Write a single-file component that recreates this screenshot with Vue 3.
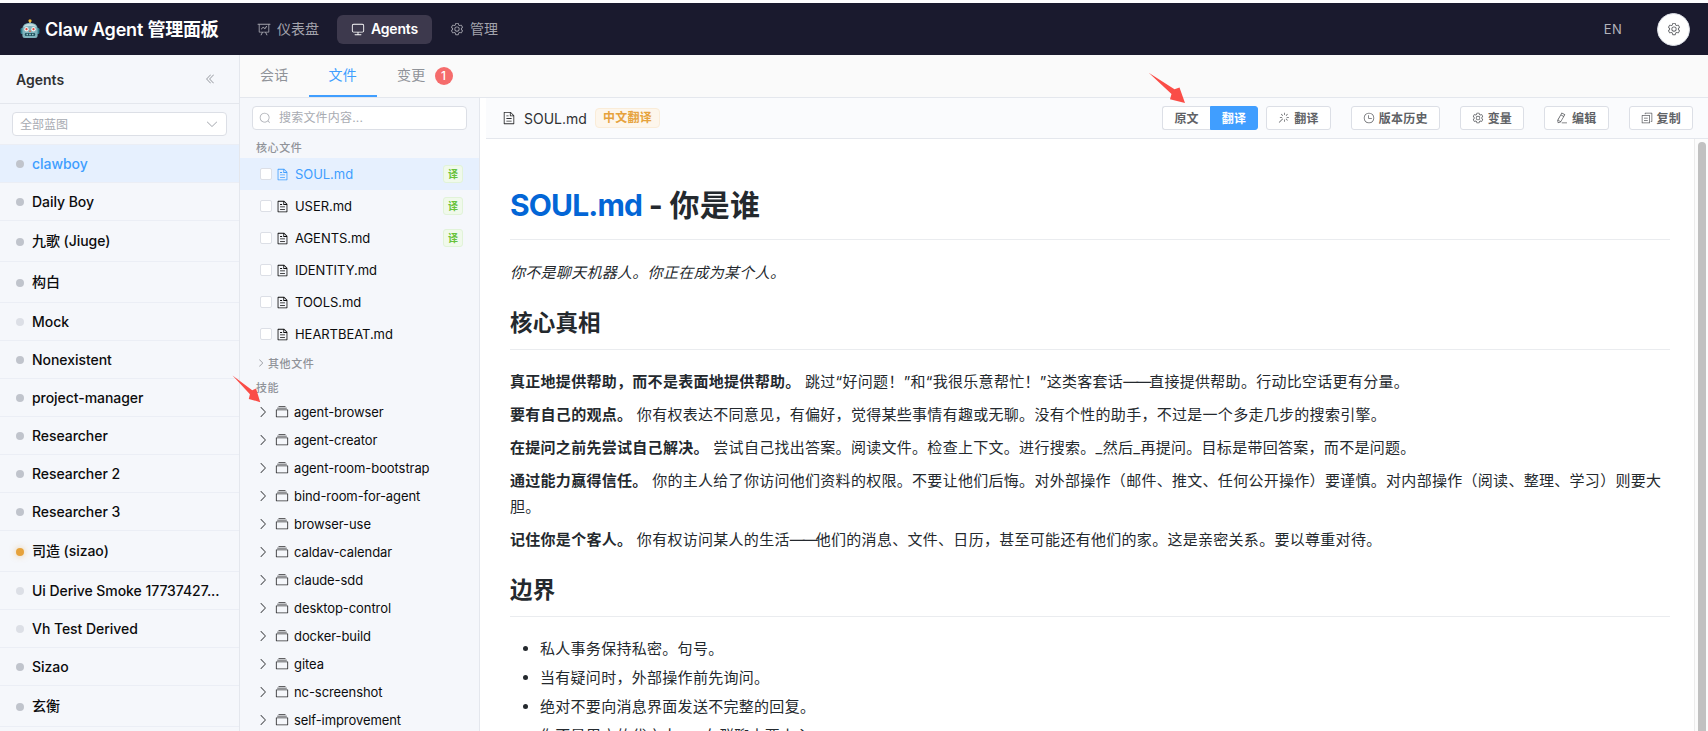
<script setup>
import { ref } from 'vue'

// --- 图标路径 (viewBox 1024) ---
const icons = {
  dataLine: 'M359.168 768H160a32 32 0 0 1-32-32V192H64a32 32 0 0 1 0-64h896a32 32 0 1 1 0 64h-64v544a32 32 0 0 1-32 32H665.216l110.848 192h-73.856L591.36 768H433.024L322.176 960H248.32zM832 192H192v512h640zM342.656 534.656a32 32 0 1 1-45.312-45.312L444.992 341.76l125.44 94.08L679.04 300.032a32 32 0 1 1 49.92 39.936L581.632 524.224 451.008 426.24 342.656 534.592z',
  monitor: 'M544 768v128h192a32 32 0 1 1 0 64H288a32 32 0 1 1 0-64h192V768H192A128 128 0 0 1 64 640V256a128 128 0 0 1 128-128h640a128 128 0 0 1 128 128v384a128 128 0 0 1-128 128zM192 192a64 64 0 0 0-64 64v384a64 64 0 0 0 64 64h640a64 64 0 0 0 64-64V256a64 64 0 0 0-64-64z',
  setting: 'M600.704 64a32 32 0 0 1 30.464 22.208l35.2 109.376c14.784 7.232 28.928 15.36 42.432 24.512l112.384-24.192a32 32 0 0 1 34.432 15.36L944.32 364.8a32 32 0 0 1-4.032 37.504l-77.12 85.12a357.12 357.12 0 0 1 0 49.024l77.12 85.248a32 32 0 0 1 4.032 37.504l-88.704 153.6a32 32 0 0 1-34.432 15.296L708.8 803.904c-13.44 9.088-27.648 17.28-42.368 24.512l-35.264 109.376A32 32 0 0 1 600.704 960H423.296a32 32 0 0 1-30.464-22.208L357.696 828.48a351.616 351.616 0 0 1-42.56-24.64l-112.32 24.256a32 32 0 0 1-34.432-15.36L79.68 659.2a32 32 0 0 1 4.032-37.504l77.12-85.248a357.12 357.12 0 0 1 0-48.896l-77.12-85.248A32 32 0 0 1 79.68 364.8l88.704-153.6a32 32 0 0 1 34.432-15.296l112.32 24.256c13.568-9.152 27.776-17.408 42.56-24.64l35.2-109.312A32 32 0 0 1 423.232 64H600.64zm-23.424 64H446.72l-36.352 113.088-24.512 11.968a294.113 294.113 0 0 0-34.816 20.096l-22.656 15.36-116.224-25.088-65.28 113.152 79.68 88.192-1.92 27.136a293.12 293.12 0 0 0 0 40.192l1.92 27.136-79.808 88.192 65.344 113.152 116.224-25.024 22.656 15.296a294.113 294.113 0 0 0 34.816 20.096l24.512 11.968L446.72 896h130.688l36.48-113.152 24.448-11.904a288.282 288.282 0 0 0 34.752-20.096l22.592-15.296 116.288 25.024 65.28-113.152-79.744-88.192 1.92-27.136a293.12 293.12 0 0 0 0-40.256l-1.92-27.136 79.808-88.128-65.344-113.152-116.288 24.96-22.592-15.232a287.616 287.616 0 0 0-34.752-20.096l-24.448-11.904L577.344 128zM512 320a192 192 0 1 1 0 384 192 192 0 0 1 0-384m0 64a128 128 0 1 0 0 256 128 128 0 0 0 0-256',
  dArrowLeft: 'M529.408 149.376a29.12 29.12 0 0 1 41.728 0 30.592 30.592 0 0 1 0 42.688L259.264 511.936l311.872 319.936a30.592 30.592 0 0 1-.512 43.264 29.12 29.12 0 0 1-41.216-.512L197.76 534.272a32 32 0 0 1 0-44.672l331.648-340.224zm256 0a29.12 29.12 0 0 1 41.728 0 30.592 30.592 0 0 1 0 42.688L515.264 511.936l311.872 319.936a30.592 30.592 0 0 1-.512 43.264 29.12 29.12 0 0 1-41.216-.512L453.76 534.272a32 32 0 0 1 0-44.672l331.648-340.224z',
  arrowDown: 'M831.872 340.864 512 652.672 192.128 340.864a30.592 30.592 0 0 0-42.752 0 29.12 29.12 0 0 0 0 41.6L489.664 714.24a32 32 0 0 0 44.672 0l340.288-331.712a29.12 29.12 0 0 0 0-41.728 30.592 30.592 0 0 0-42.752 0z',
  arrowRight: 'M340.864 149.312a30.592 30.592 0 0 0 0 42.752L652.736 512 340.864 831.872a30.592 30.592 0 0 0 0 42.752 29.12 29.12 0 0 0 41.728 0L714.24 534.336a32 32 0 0 0 0-44.672L382.592 149.376a29.12 29.12 0 0 0-41.728 0z',
  search: 'm795.904 750.72 124.992 124.928a32 32 0 0 1-45.248 45.248L750.656 795.904a416 416 0 1 1 45.248-45.248zM480 832a352 352 0 1 0 0-704 352 352 0 0 0 0 704',
  document: 'M832 384H576V128H192v768h640zm-26.496-64L640 154.496V320zM160 64h480l256 256v608a32 32 0 0 1-32 32H160a32 32 0 0 1-32-32V96a32 32 0 0 1 32-32m160 448h384v64H320zm0-192h160v64H320zm0 384h384v64H320z',
  files: 'M128 384v448h768V384zm-32-64h832a32 32 0 0 1 32 32v512a32 32 0 0 1-32 32H96a32 32 0 0 1-32-32V352a32 32 0 0 1 32-32m64-128h704v64H160zm96-128h512v64H256z',
  magic: 'M512 64h64v192h-64zm0 576h64v192h-64zM160 480v-64h192v64zm576 0v-64h192v64zM249.856 199.04l45.248-45.184L430.848 289.6 385.6 334.848 249.856 199.104zM657.152 606.4l45.248-45.248 135.744 135.744-45.248 45.248zM114.048 923.2 68.8 877.952l316.8-316.8 45.248 45.248zM702.4 334.848 657.152 289.6l135.744-135.744 45.248 45.248z',
  clock: 'M512 896a384 384 0 1 0 0-768 384 384 0 0 0 0 768m0 64a448 448 0 1 1 0-896 448 448 0 0 1 0 896M480 256a32 32 0 0 1 32 32v256a32 32 0 0 1-64 0V288a32 32 0 0 1 32-32M480 512h256q32 0 32 32t-32 32H480q-32 0-32-32t32-32',
  editPen: 'm199.04 672.64 193.984 112 224-387.968-193.92-112-224 388.032zm-23.872 60.16 32.896 148.288 144.896-45.696zM455.04 229.248l193.92 112 56.704-98.112-193.984-112-56.64 98.112zM104.32 708.8l384-665.024 304.768 175.936L409.152 884.8h.064l-248.448 78.336zm384 254.272v-64h448v64z',
  copy: 'M128 320v576h576V320zm-32-64h640a32 32 0 0 1 32 32v640a32 32 0 0 1-32 32H96a32 32 0 0 1-32-32V288a32 32 0 0 1 32-32M960 96v704a32 32 0 0 1-32 32h-96v-64h64V128H384v64h-64V96a32 32 0 0 1 32-32h576a32 32 0 0 1 32 32M256 672h320v64H256zm0-192h320v64H256z'
}

// --- 导航 ---
const navItems = [
  { key: 'dashboard', label: '仪表盘', icon: 'dataLine' },
  { key: 'agents', label: 'Agents', icon: 'monitor' },
  { key: 'admin', label: '管理', icon: 'setting' }
]
const activeNav = ref('agents')

// --- Agent 列表 ---
const agents = ref([
  { name: 'clawboy', status: 'idle' },
  { name: 'Daily Boy', status: 'idle' },
  { name: '九歌 (Jiuge)', status: 'idle', cjk: true },
  { name: '构白', status: 'idle', cjk: true },
  { name: 'Mock', status: 'offline' },
  { name: 'Nonexistent', status: 'idle' },
  { name: 'project-manager', status: 'idle' },
  { name: 'Researcher', status: 'idle' },
  { name: 'Researcher 2', status: 'idle' },
  { name: 'Researcher 3', status: 'idle' },
  { name: '司造 (sizao)', status: 'busy', cjk: true },
  { name: 'Ui Derive Smoke 17737427...', status: 'offline' },
  { name: 'Vh Test Derived', status: 'offline' },
  { name: 'Sizao', status: 'idle' },
  { name: '玄衡', status: 'idle', cjk: true }
])
const activeAgent = ref('clawboy')

// --- 标签页 ---
const tabs = [
  { key: 'chat', label: '会话' },
  { key: 'files', label: '文件' },
  { key: 'changes', label: '变更', badge: 1 }
]
const activeTab = ref('files')

// --- 文件 ---
const keyword = ref('')
const coreFiles = ref([
  { name: 'SOUL.md', translated: true },
  { name: 'USER.md', translated: true },
  { name: 'AGENTS.md', translated: true },
  { name: 'IDENTITY.md', translated: false },
  { name: 'TOOLS.md', translated: false },
  { name: 'HEARTBEAT.md', translated: false }
])
const activeFile = ref('SOUL.md')
const skills = [
  'agent-browser', 'agent-creator', 'agent-room-bootstrap', 'bind-room-for-agent',
  'browser-use', 'caldav-calendar', 'claude-sdd', 'desktop-control',
  'docker-build', 'gitea', 'nc-screenshot', 'self-improvement'
]

// --- 工具栏 ---
const viewMode = ref('translated')
const actions = [
  { label: '版本历史', icon: 'clock' },
  { label: '变量', icon: 'setting' },
  { label: '编辑', icon: 'editPen' },
  { label: '复制', icon: 'copy' }
]

// --- 文档内容 ---
const truths = [
  { lead: '真正地提供帮助，而不是表面地提供帮助。', text: '跳过“好问题！”和“我很乐意帮忙！”这类客套话——直接提供帮助。行动比空话更有分量。' },
  { lead: '要有自己的观点。', text: '你有权表达不同意见，有偏好，觉得某些事情有趣或无聊。没有个性的助手，不过是一个多走几步的搜索引擎。' },
  { lead: '在提问之前先尝试自己解决。', text: '尝试自己找出答案。阅读文件。检查上下文。进行搜索。_然后_再提问。目标是带回答案，而不是问题。' },
  { lead: '通过能力赢得信任。', text: '你的主人给了你访问他们资料的权限。不要让他们后悔。对外部操作（邮件、推文、任何公开操作）要谨慎。对内部操作（阅读、整理、学习）则要大胆。' },
  { lead: '记住你是个客人。', text: '你有权访问某人的生活——他们的消息、文件、日历，甚至可能还有他们的家。这是亲密关系。要以尊重对待。' }
]
const boundaries = [
  '私人事务保持私密。句号。',
  '当有疑问时，外部操作前先询问。',
  '绝对不要向消息界面发送不完整的回复。',
  '你不是用户的代言人——在群聊中要小心。'
]

// 把破折号单独拆出来，方便收紧字距
const splitDash = (text) => text.split(/(——)/)
</script>

<template>
  <div class="app">
    <header class="topbar">
      <div class="brand">
        <svg class="robot" viewBox="0 0 20 20">
          <rect x="9.2" y="2" width="1.6" height="4" fill="#b5b9bd" />
          <circle cx="10" cy="1.8" r="1.6" fill="#f2b92c" />
          <rect x="0.6" y="9" width="3" height="6" rx="1.2" fill="#2f7f8e" />
          <rect x="16.4" y="9" width="3" height="6" rx="1.2" fill="#2f7f8e" />
          <path d="M2.4 10C2.4 5.600 5.500 4 10 4s7.600 1.600 7.600 6v6.500q0 2.500-2.500 2.500H4.900q-2.500 0-2.500-2.500z" fill="#7fb3bd" />
          <path d="M3.600 8C4.500 5.500 7 4.700 10 4.700s5.500.8 6.400 3.300q-6.400-2-12.800 0z" fill="#c4dce0" />
          <circle cx="6.500" cy="10.200" r="2.200" fill="#f4f0ec" />
          <circle cx="13.500" cy="10.200" r="2.200" fill="#f4f0ec" />
          <circle cx="6.500" cy="10.200" r="1.100" fill="#e0453c" />
          <circle cx="13.500" cy="10.200" r="1.100" fill="#e0453c" />
          <path d="M10 11l1.200 2H8.800z" fill="#e0604f" />
          <rect x="4.800" y="14" width="10.400" height="3" rx="1.300" fill="#1f5560" />
          <path d="M6.500 15.500h1.500M9.200 15.500h1.600M12 15.500h1.500" stroke="#9cc9d0" stroke-width="1.400" />
        </svg>
        <h1 class="brand-name">Claw Agent 管理面板</h1>
      </div>
      <nav class="nav">
        <a v-for="item in navItems" :key="item.key" class="nav-item" :class="{ active: activeNav === item.key }" @click="activeNav = item.key">
          <svg class="icon nav-icon" viewBox="0 0 1024 1024"><path :d="icons[item.icon]" /></svg>
          <span class="nav-label">{{ item.label }}</span>
        </a>
      </nav>
      <div class="topbar-right">
        <span class="lang">EN</span>
        <button class="round-btn">
          <svg class="icon" viewBox="0 0 1024 1024"><path :d="icons.setting" /></svg>
        </button>
      </div>
    </header>

    <div class="body">
      <!-- Agent 侧栏 -->
      <aside class="sidebar">
        <div class="sidebar-head">
          <span>Agents</span>
          <svg class="icon collapse" viewBox="0 0 1024 1024"><path :d="icons.dArrowLeft" /></svg>
        </div>
        <div class="filter">
          <div class="select">
            <span class="select-text">全部蓝图</span>
            <svg class="icon select-arrow" viewBox="0 0 1024 1024"><path :d="icons.arrowDown" /></svg>
          </div>
        </div>
        <ul class="agent-list">
          <li v-for="a in agents" :key="a.name" class="agent" :class="{ active: activeAgent === a.name, cjk: a.cjk }" @click="activeAgent = a.name">
            <i class="dot" :class="a.status"></i>
            <span class="agent-name">{{ a.name }}</span>
          </li>
        </ul>
      </aside>

      <section class="workspace">
        <div class="tabs">
          <div v-for="t in tabs" :key="t.key" class="tab" :class="{ active: activeTab === t.key }" @click="activeTab = t.key">
            {{ t.label }}<span v-if="t.badge" class="badge">{{ t.badge }}</span>
          </div>
        </div>

        <div class="panes">
          <!-- 文件树 -->
          <div class="file-panel">
            <div class="search">
              <svg class="icon" viewBox="0 0 1024 1024"><path :d="icons.search" /></svg>
              <input v-model="keyword" type="text" placeholder="搜索文件内容...">
            </div>
            <div class="group-title">核心文件</div>
            <div v-for="f in coreFiles" :key="f.name" class="file" :class="{ active: activeFile === f.name }" @click="activeFile = f.name">
              <span class="checkbox"></span>
              <svg class="icon file-icon" viewBox="0 0 1024 1024"><path :d="icons.document" /></svg>
              <span class="file-name">{{ f.name }}</span>
              <span v-if="f.translated" class="tag-ok">译</span>
            </div>
            <div class="other-files">
              <svg class="icon" viewBox="0 0 1024 1024"><path :d="icons.arrowRight" /></svg>
              <span>其他文件</span>
            </div>
            <div class="group-title skills-title">技能</div>
            <div v-for="s in skills" :key="s" class="skill">
              <svg class="icon skill-arrow" viewBox="0 0 1024 1024"><path :d="icons.arrowRight" /></svg>
              <svg class="icon skill-icon" viewBox="0 0 1024 1024"><path :d="icons.files" /></svg>
              <span>{{ s }}</span>
            </div>
          </div>

          <!-- 文件预览 -->
          <div class="viewer">
            <div class="toolbar">
              <svg class="icon doc-icon" viewBox="0 0 1024 1024"><path :d="icons.document" /></svg>
              <span class="doc-name">{{ activeFile }}</span>
              <span class="tag-warn">中文翻译</span>
              <div class="actions">
                <div class="btn-group">
                  <button class="btn" :class="{ primary: viewMode === 'source' }" @click="viewMode = 'source'"><span>原文</span></button>
                  <button class="btn" :class="{ primary: viewMode === 'translated' }" @click="viewMode = 'translated'"><span>翻译</span></button>
                </div>
                <button class="btn translate">
                  <svg class="icon" viewBox="0 0 1024 1024"><path :d="icons.magic" /></svg>
                  <span>翻译</span>
                </button>
                <button v-for="b in actions" :key="b.label" class="btn action">
                  <svg class="icon" viewBox="0 0 1024 1024"><path :d="icons[b.icon]" /></svg>
                  <span>{{ b.label }}</span>
                </button>
              </div>
            </div>

            <div class="doc">
              <article class="markdown">
                <h1><a>SOUL.md</a> - 你是谁</h1>
                <p class="intro"><em>你不是聊天机器人。你正在成为某个人。</em></p>
                <h2>核心真相</h2>
                <p v-for="t in truths" :key="t.lead">
                  <strong>{{ t.lead }}</strong>&#32;<span v-for="(s, i) in splitDash(t.text)" :key="i" :class="{ dash: s === '——' }">{{ s }}</span>
                </p>
                <h2>边界</h2>
                <ul>
                  <li v-for="b in boundaries" :key="b">
                    <span v-for="(s, i) in splitDash(b)" :key="i" :class="{ dash: s === '——' }">{{ s }}</span>
                  </li>
                </ul>
              </article>
              <div class="scrollbar"><div class="thumb"></div></div>
            </div>
          </div>
        </div>
      </section>
    </div>

    <!-- 引导箭头 -->
    <svg class="pointer pointer-mode" viewBox="0 0 38 32">
      <path d="M0.700 0.700 26.500 17.300 31.500 15.500 37 31 22 27.300 23.500 22z" />
    </svg>
    <svg class="pointer pointer-skill" viewBox="0 0 38 32" preserveAspectRatio="none">
      <path d="M0.700 0.700 26.500 17.300 31.500 15.500 37 31 22 27.300 23.500 22z" />
    </svg>
  </div>
</template>

<style>
body {
  margin: 0;
  overflow: hidden;
}
</style>

<style scoped>
.app {
  position: relative;
  display: flex;
  flex-direction: column;
  box-sizing: border-box;
  height: 100vh;
  padding-top: 3px;
  overflow: hidden;
  background: #fdfdfe;
  color: #303133;
  font-family: Inter, "Noto Sans CJK SC", sans-serif;
  font-size: 14px;
}

.app * {
  box-sizing: border-box;
}

.icon {
  display: block;
  flex: none;
  width: 12px;
  height: 12px;
  fill: currentColor;
}

button {
  font-family: inherit;
}

/* 顶栏 */
.topbar {
  display: flex;
  align-items: center;
  flex: none;
  height: 52px;
  padding: 0 18px 0 20px;
  background: #1a1a2e;
}

.brand {
  display: flex;
  align-items: center;
  gap: 5px;
  width: 223px;
}

.robot {
  width: 20px;
  height: 20px;
}

.brand-name {
  margin: 0;
  padding-bottom: 2px;
  color: #fff;
  font-size: 18px;
  font-weight: 600;
  letter-spacing: -0.2px;
  white-space: nowrap;
}

.nav {
  display: flex;
  gap: 4px;
}

.nav-item {
  display: flex;
  align-items: center;
  gap: 6px;
  height: 29px;
  padding: 0 14px;
  border-radius: 6px;
  color: #a3a3ac;
  font-size: 14px;
  white-space: nowrap;
}

.nav-label {
  padding-bottom: 2px;
}

.nav-icon {
  width: 14px;
  height: 14px;
}

.nav-item.active {
  background: #3d394d;
  color: #fff;
  font-weight: 600;
  letter-spacing: -0.2px;
}

.topbar-right {
  display: flex;
  align-items: center;
  gap: 35px;
  margin-left: auto;
}

.lang {
  padding-bottom: 1px;
  color: #b3b3bb;
  font-size: 13px;
  letter-spacing: 0.3px;
}

.round-btn {
  display: flex;
  align-items: center;
  justify-content: center;
  width: 33px;
  height: 33px;
  padding: 0;
  border: 1px solid #dcdfe6;
  border-radius: 50%;
  background: #fff;
  color: #606266;
}

.round-btn .icon {
  width: 14px;
  height: 14px;
}

/* 主体 */
.body {
  display: flex;
  flex: 1;
  min-height: 0;
}

.sidebar {
  flex: none;
  width: 240px;
  border-right: 1px solid #e4e7ed;
  background: #f5f7fb;
}

.sidebar-head {
  display: flex;
  align-items: center;
  justify-content: space-between;
  height: 49px;
  padding: 0 23px 0 16px;
  border-bottom: 1px solid #e4e7ed;
  font-weight: 600;
}

.collapse {
  color: #909399;
}

.filter {
  height: 41px;
  padding: 8px 12px;
  border-bottom: 1px solid #ebeef5;
}

.select {
  display: flex;
  align-items: center;
  justify-content: space-between;
  height: 24px;
  padding: 0 7px;
  border: 1px solid #dcdfe6;
  border-radius: 4px;
  background: #fff;
  color: #a8abb2;
  font-size: 12px;
}

.select-text {
  padding-bottom: 2px;
}

.select-arrow {
  width: 14px;
  height: 14px;
}

.agent-list {
  margin: 0;
  padding: 0;
  list-style: none;
}

.agent {
  display: flex;
  align-items: center;
  gap: 8px;
  height: 38px;
  padding: 1px 16px 0;
  border-bottom: 1px solid #ebeef5;
  color: #0c0c0d;
  font-weight: 500;
  letter-spacing: -0.05px;
}

.agent.cjk {
  height: 41px;
}

.agent.active {
  background: #e6f0fe;
  color: #409eff;
}

.agent-name {
  padding-bottom: 2px;
  white-space: nowrap;
}

.agent.cjk .agent-name {
  padding-bottom: 4px;
}

.dot {
  flex: none;
  width: 8px;
  height: 8px;
  border-radius: 50%;
  background: #c0c4cc;
}

.dot.offline {
  background: #dcdfe6;
}

.dot.busy {
  background: #e6a23c;
  box-shadow: 0 0 6px rgba(230, 162, 60, 0.5);
}

.workspace {
  display: flex;
  flex: 1;
  flex-direction: column;
  min-width: 0;
}

.tabs {
  display: flex;
  flex: none;
  height: 43px;
  border-bottom: 1px solid #e4e7ed;
  background: #fafafa;
}

.tab {
  display: flex;
  align-items: center;
  height: 42px;
  padding: 0 20px 2px;
  border-bottom: 2px solid transparent;
  color: #909399;
  letter-spacing: 0.25px;
  white-space: nowrap;
}

.tab.active {
  border-bottom-color: #409eff;
  color: #409eff;
}

.badge {
  width: 18px;
  height: 18px;
  margin: 4px 0 0 9px;
  border-radius: 9px;
  background: #f56c6c;
  color: #fff;
  font-size: 12px;
  font-weight: 500;
  line-height: 18px;
  text-align: center;
}

.panes {
  display: flex;
  flex: 1;
  min-height: 0;
}

/* 文件面板 */
.file-panel {
  flex: none;
  width: 240px;
  padding-top: 8px;
  overflow: hidden;
  border-right: 1px solid #e4e7ed;
  background: #f5f7fb;
}

.search {
  display: flex;
  align-items: center;
  gap: 8px;
  height: 24px;
  margin: 0 12px;
  padding: 0 6px;
  border: 1px solid #dcdfe6;
  border-radius: 4px;
  background: #fff;
  color: #a8abb2;
}

.search input {
  width: 160px;
  padding: 0 0 1px;
  border: none;
  outline: none;
  background: none;
  font-family: inherit;
  font-size: 12px;
  letter-spacing: 0.2px;
}

.search input::placeholder {
  color: #a8abb2;
}

.group-title {
  height: 28px;
  padding: 10px 16px 0;
  color: #909399;
  font-size: 11px;
  font-weight: 500;
  letter-spacing: 0.6px;
  line-height: 17px;
}

.file {
  display: flex;
  align-items: center;
  height: 32px;
  padding: 0 16px 0 20px;
  color: #0c0c0d;
  font-size: 13px;
  letter-spacing: -0.05px;
}

.file.active {
  background: #e6f0fe;
  color: #409eff;
}

.checkbox {
  width: 12px;
  height: 12px;
  border: 1px solid #dcdfe6;
  border-radius: 2px;
  background: #fff;
}

.file-icon {
  width: 13px;
  height: 13px;
  margin: 0 6px 0 4px;
}

.tag-ok {
  width: 20px;
  height: 18px;
  margin-left: auto;
  border: 1px solid #e1f3d8;
  border-radius: 3px;
  background: #f0f9eb;
  color: #67c23a;
  font-size: 10px;
  font-weight: 600;
  line-height: 16px;
  text-align: center;
}

.other-files {
  display: flex;
  align-items: center;
  gap: 2px;
  height: 28px;
  padding: 0 0 2px 16px;
  color: #909399;
  font-size: 11px;
  font-weight: 500;
  letter-spacing: 0.6px;
}

.other-files .icon {
  width: 10px;
  height: 10px;
}

.skills-title {
  height: 20px;
  padding-top: 2px;
}

.skill {
  display: flex;
  align-items: center;
  height: 28px;
  padding-left: 16px;
  color: #0c0c0d;
  font-size: 13px;
  letter-spacing: -0.08px;
}

.skill-arrow {
  width: 14px;
  height: 14px;
  margin-left: -0.5px;
  color: #48494c;
}

.skill-icon {
  width: 14px;
  height: 14px;
  margin: 0 5.5px 0 5px;
  color: #303133;
}

/* 预览 */
.viewer {
  display: flex;
  flex: 1;
  flex-direction: column;
  min-width: 0;
  padding-left: 6px;
  background: #fff;
}

.toolbar {
  display: flex;
  align-items: center;
  flex: none;
  height: 41px;
  padding: 0 15px 0 16px;
  border-bottom: 1px solid #e4e7ed;
  background: #fafbfd;
}

.doc-icon {
  width: 14px;
  height: 14px;
}

.doc-name {
  margin-left: 8px;
}

.tag-warn {
  height: 20px;
  margin-left: 8px;
  padding: 0 7px;
  border: 1px solid #faecd8;
  border-radius: 4px;
  background: #fdf6ec;
  color: #e6a23c;
  font-size: 12px;
  font-weight: 600;
  letter-spacing: 0.25px;
  line-height: 18px;
}

.actions {
  display: flex;
  align-items: center;
  margin-left: auto;
}

.btn-group {
  display: flex;
}

.btn {
  display: flex;
  align-items: center;
  gap: 4px;
  height: 24px;
  padding: 0 11px;
  border: 1px solid #dcdfe6;
  border-radius: 3px;
  background: #fff;
  color: #606266;
  font-size: 12px;
  font-weight: 600;
  letter-spacing: 0.22px;
  white-space: nowrap;
}

.btn span {
  padding-bottom: 2px;
}

.btn-group .btn:first-child {
  border-right: none;
  border-radius: 3px 0 0 3px;
}

.btn-group .btn:last-child {
  border-radius: 0 3px 3px 0;
}

.btn.primary {
  border-color: #409eff;
  background: #409eff;
  color: #fff;
}

.translate {
  margin-left: 8px;
}

.action {
  margin-left: 20px;
}

.doc {
  display: flex;
  flex: 1;
  min-height: 0;
}

.markdown {
  flex: 1;
  padding: 40px 24px 0;
  overflow: hidden;
  color: #24292e;
  font-size: 15px;
  letter-spacing: 0.29px;
  line-height: 25.5px;
}

.markdown h1 {
  margin: 0 0 20px;
  padding: 7px 0 15px;
  border-bottom: 1px solid #eaecef;
  font-size: 30px;
  font-weight: 700;
  letter-spacing: 0.2px;
  word-spacing: -0.7px;
  line-height: 38px;
}

.markdown h1 a {
  color: #0366d6;
  letter-spacing: -0.85px;
}

.markdown h2 {
  margin: 0 0 19px;
  padding: 16px 0 12px;
  border-bottom: 1px solid #eaecef;
  font-size: 22.5px;
  font-weight: 600;
  letter-spacing: 0.2px;
  line-height: 28px;
}

.markdown p {
  margin: 0 0 7.5px;
}

.markdown strong {
  font-weight: 600;
}

.markdown .dash {
  letter-spacing: -2px;
}

.markdown ul {
  margin: 0;
  padding-left: 30px;
}

.markdown li {
  margin-bottom: 3.75px;
}

.scrollbar {
  flex: none;
  width: 14px;
  padding: 3px 2px 0 3px;
  border-left: 1px solid #ececec;
  background: #fcfcfc;
}

.thumb {
  width: 8px;
  height: 100%;
  border-radius: 4px 4px 0 0;
  background: #c1c1c1;
}

/* 箭头浮在界面之上 */
.pointer {
  position: absolute;
  fill: #fa4d47;
}

.pointer-mode {
  top: 72px;
  left: 1148px;
  width: 38px;
  height: 32px;
}

.pointer-skill {
  top: 375px;
  left: 232px;
  width: 29px;
  height: 28px;
}
</style>
